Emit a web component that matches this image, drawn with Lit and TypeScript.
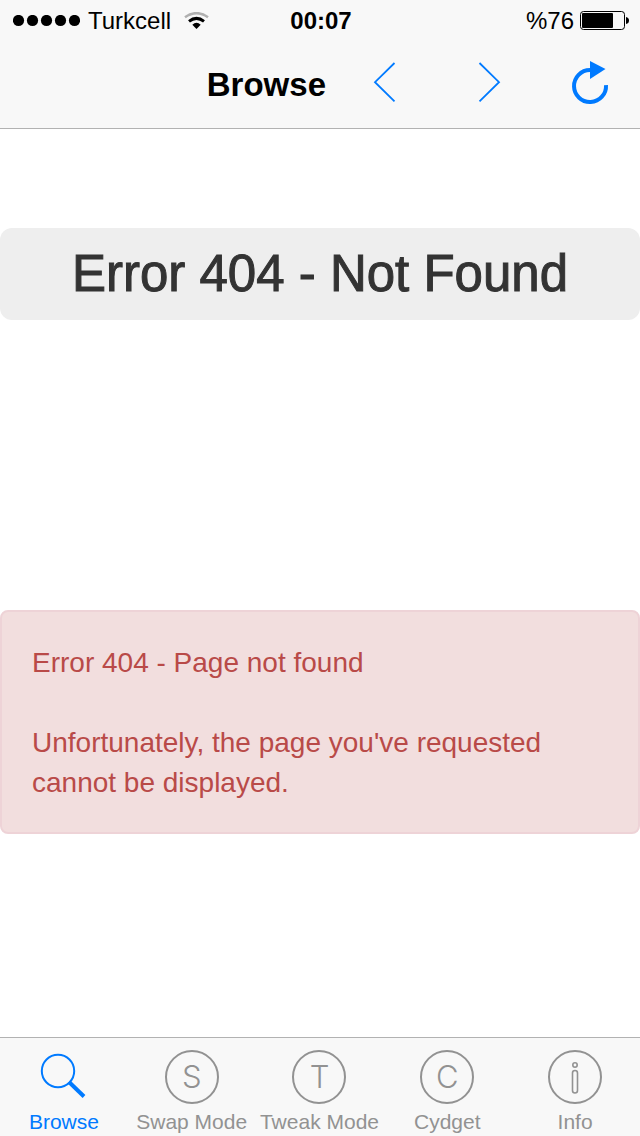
import { LitElement, html, css, svg } from "lit";
import { customElement, state } from "lit/decorators.js";

interface Tab {
  id: string;
  label: string;
  letter?: string;
}

const TABS: Tab[] = [
  { id: "browse", label: "Browse" },
  { id: "swap", label: "Swap Mode", letter: "S" },
  { id: "tweak", label: "Tweak Mode", letter: "T" },
  { id: "cydget", label: "Cydget", letter: "C" },
  { id: "info", label: "Info" },
];

@customElement("status-bar")
class StatusBar extends LitElement {
  static styles = css`
    :host {
      display: grid;
      grid-template-columns: 1fr auto 1fr;
      align-items: center;
      height: 42px;
      padding: 0 11px 0 13px;
      font-size: 24px;
      line-height: 42px;
      color: #000;
    }
    .side {
      display: flex;
      align-items: center;
      gap: 8px;
    }
    .end {
      justify-content: flex-end;
      gap: 6px;
    }
    .time {
      font-weight: 700;
    }
    svg {
      display: block;
    }
    .wifi {
      margin-left: 5px;
    }
  `;

  render() {
    return html`
      <div class="side">
        <svg width="67" height="12" viewBox="0 0 67 12" aria-hidden="true">
          ${[0, 1, 2, 3, 4].map(
            (i) => svg`<circle cx=${5.5 + i * 14} cy="5.5" r="5.6"></circle>`
          )}
        </svg>
        <span>Turkcell</span>
        <svg class="wifi" width="25" height="18" viewBox="0 0 25 18" aria-hidden="true">
          <path d="M1 5.2Q12.5 -2.8 24 5.2" fill="none" stroke="#b0b0b0" stroke-width="2.6"></path>
          <path d="M5 9.4Q12.5 3.4 20 9.4" fill="none" stroke="#000" stroke-width="3"></path>
          <path d="M8.3 12.8Q12.5 8.8 16.7 12.8L12.5 17Z"></path>
        </svg>
      </div>
      <span class="time">00:07</span>
      <div class="side end">
        <span>%76</span>
        <svg width="49" height="20" viewBox="0 0 49 20" aria-hidden="true">
          <rect x="0.5" y="0.5" width="44" height="18" rx="3" fill="none" stroke="#000"></rect>
          <rect x="2" y="2" width="31" height="15" rx="1"></rect>
          <path d="M46 6Q49 6.5 49 9.5T46 13Z"></path>
        </svg>
      </div>
    `;
  }
}

@customElement("nav-bar")
class NavBar extends LitElement {
  static styles = css`
    :host {
      display: flex;
      align-items: center;
      gap: 54px;
      height: 86px;
      padding-right: 26px;
      border-bottom: 1px solid #b2b2b2;
    }
    h1 {
      flex: 1;
      margin: 0;
      margin-right: -18px;
      text-align: right;
      font-size: 33px;
      line-height: 40px;
      font-weight: 700;
      color: #000;
    }
    button {
      width: 48px;
      height: 48px;
      padding: 0;
      border: 0;
      background: none;
      color: #007aff;
    }
    svg {
      display: block;
      fill: none;
      stroke: currentColor;
    }
    .solid {
      fill: currentColor;
      stroke: none;
    }
  `;

  render() {
    return html`
      <h1>Browse</h1>
      <button type="button" aria-label="Back">
        <svg width="48" height="48" viewBox="0 0 48 48" stroke-width="1.8">
          <path d="M32.5 2L13 21.2L32.5 40.3"></path>
        </svg>
      </button>
      <button type="button" aria-label="Forward">
        <svg width="48" height="48" viewBox="0 0 48 48" stroke-width="1.8">
          <path d="M15.5 2L35 21.2L15.5 40.3"></path>
        </svg>
      </button>
      <button type="button" aria-label="Reload">
        <svg width="48" height="48" viewBox="0 0 48 48" stroke-width="4">
          <path d="M24 9A16 16 0 1 0 40 24"></path>
          <path class="solid" d="M24 0V18L39.5 8Z"></path>
        </svg>
      </button>
    `;
  }
}

@customElement("tab-bar")
class TabBar extends LitElement {
  @state() private active = "browse";

  static styles = css`
    :host {
      display: block;
      background: #f8f8f8;
      border-top: 1px solid #b2b2b2;
    }
    nav {
      display: grid;
      grid-template-columns: repeat(5, minmax(0, 1fr));
      padding-right: 1px;
    }
    button {
      display: flex;
      flex-direction: column;
      align-items: center;
      gap: 6px;
      padding: 12px 0 2px;
      border: 0;
      background: none;
      font-family: inherit;
      font-size: 21px;
      line-height: 24px;
      color: #929292;
      white-space: nowrap;
    }
    .active {
      color: #007aff;
    }
    .icon {
      display: flex;
      align-items: center;
      justify-content: center;
      box-sizing: border-box;
      width: 54px;
      height: 54px;
      font-family: Inter, "Liberation Sans", sans-serif;
      font-size: 31px;
      font-weight: 300;
      line-height: 50px;
    }
    .ring {
      border: 2px solid currentColor;
      border-radius: 50%;
    }
    svg {
      display: block;
      flex: none;
      fill: none;
      stroke: currentColor;
    }
  `;

  private icon(tab: Tab) {
    if (tab.letter) {
      return html`<span class="icon ring" aria-hidden="true">${tab.letter}</span>`;
    }
    if (tab.id === "info") {
      return html`<span class="icon ring">
        <svg width="10" height="34" viewBox="0 0 10 34" stroke-width="1.6" aria-hidden="true">
          <circle cx="5" cy="5" r="2.2"></circle>
          <rect x="2.5" y="10.5" width="5" height="22.5" rx="2.5"></rect>
        </svg>
      </span>`;
    }
    return html`<span class="icon">
      <svg width="54" height="54" viewBox="0 0 54 54" aria-hidden="true">
        <circle cx="21" cy="21" r="16.2" stroke-width="2"></circle>
        <path d="M32 32L47 46.5" stroke-width="4"></path>
      </svg>
    </span>`;
  }

  render() {
    return html`<nav aria-label="Sections">
      ${TABS.map(
        (tab) => html`<button
          type="button"
          class=${tab.id === this.active ? "active" : ""}
          @click=${() => (this.active = tab.id)}
        >
          ${this.icon(tab)}
          <span>${tab.label}</span>
        </button>`
      )}
    </nav>`;
  }
}

@customElement("app-root")
class AppRoot extends LitElement {
  static styles = css`
    :host {
      display: flex;
      flex-direction: column;
      min-height: 100vh;
      background: #fff;
      font-family: "Liberation Sans", Arial, sans-serif;
    }
    header {
      background: #f8f8f8;
    }
    main {
      flex: 1;
      padding: 99px 0;
    }
    .banner {
      margin: 0 0 290px;
      padding: 16px;
      border-radius: 12px;
      background: #eee;
      color: #333;
      text-align: center;
      font-size: 51px;
      line-height: 60px;
      font-weight: 400;
      -webkit-text-stroke: 1px #333;
    }
    .alert {
      padding: 31px 30px 29px;
      border: 2px solid #eed3d7;
      border-radius: 8px;
      background: #f2dede;
      color: #b94a48;
      font-size: 28px;
      line-height: 40px;
    }
    p {
      margin: 0;
    }
    p + p {
      margin-top: 40px;
    }
  `;

  render() {
    return html`
      <header>
        <status-bar></status-bar>
        <nav-bar></nav-bar>
      </header>
      <main>
        <h2 class="banner">Error 404 - Not Found</h2>
        <div class="alert" role="alert">
          <p>Error 404 - Page not found</p>
          <p>Unfortunately, the page you've requested cannot be displayed.</p>
        </div>
      </main>
      <tab-bar></tab-bar>
    `;
  }
}
